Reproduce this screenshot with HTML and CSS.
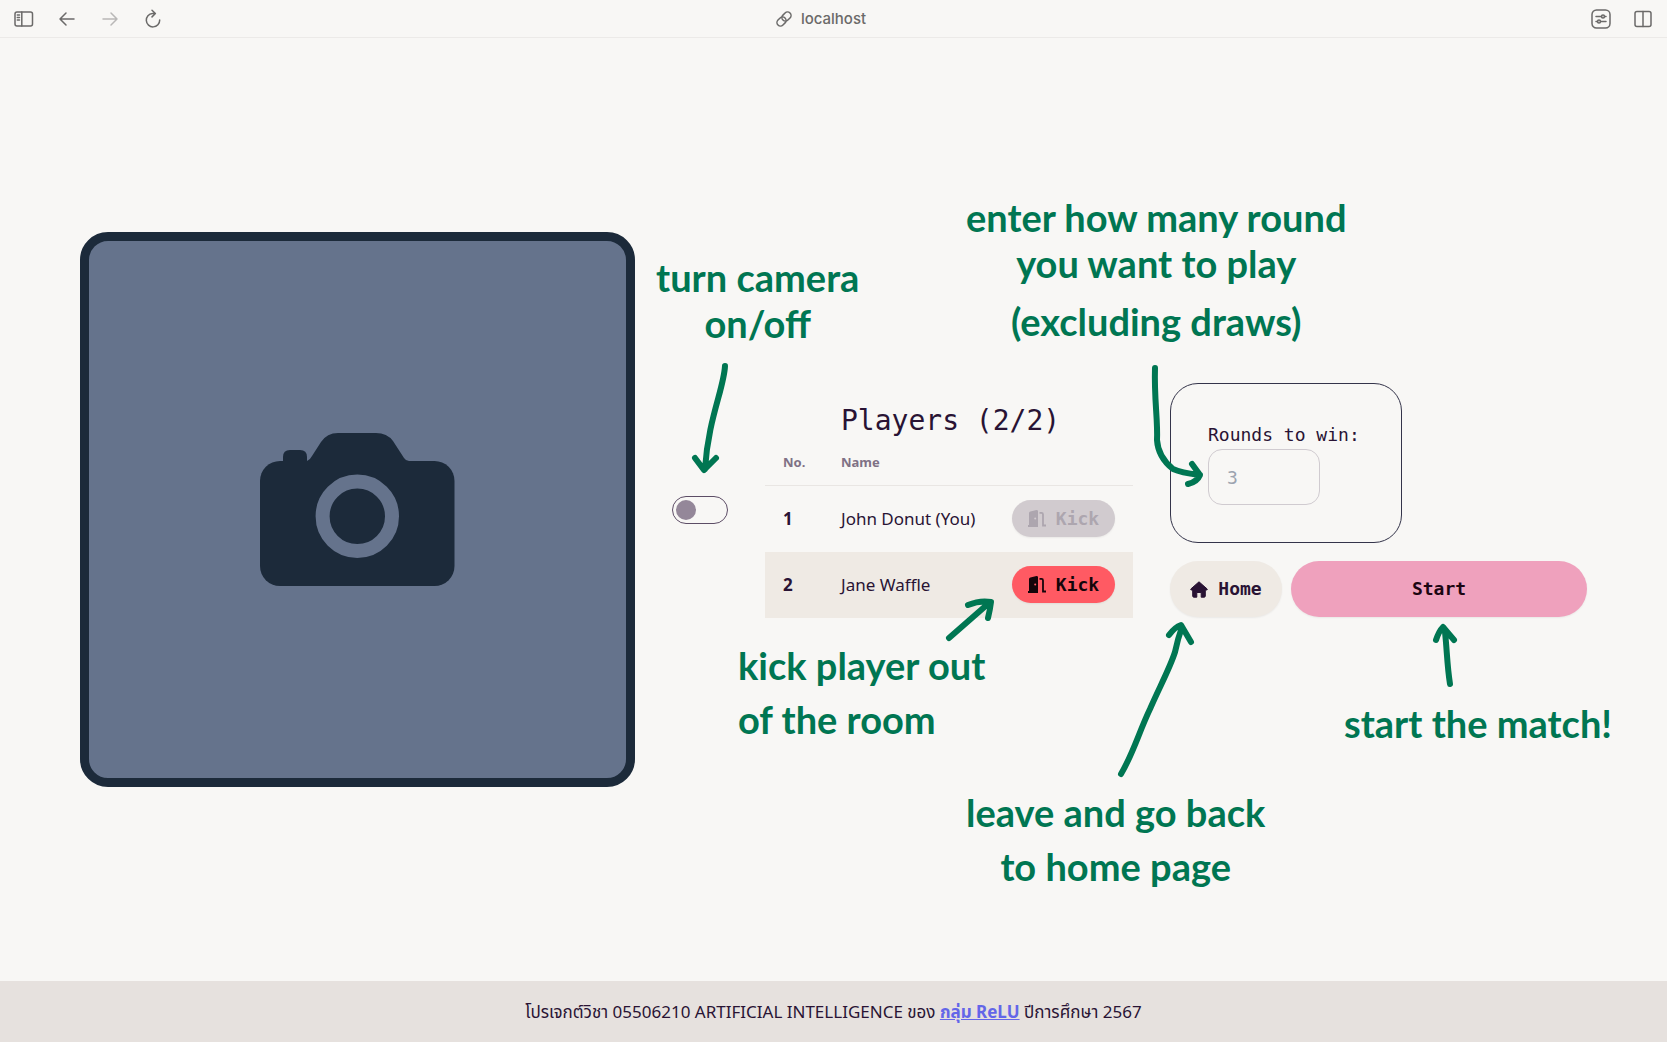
FILE: index.html
```html
<!DOCTYPE html>
<html lang="en">
<head>
<meta charset="utf-8">
<meta name="viewport" content="width=device-width, initial-scale=1">
<title>localhost</title>
<link rel="stylesheet" href="styles.css">
</head>
<body>
<svg class="defs" aria-hidden="true">
  <symbol id="door" viewBox="0 0 18 17">
    <path fill="currentColor" d="M0 15h1V3.200Q1 1.800 2.400 1.500L8.500 0Q10 0 10 1.300V17H0zM7.200 7.500a1 1 0 1 0 0 2a1 1 0 0 0 0-2z" fill-rule="evenodd"/>
    <path fill="none" stroke="currentColor" stroke-width="1.800" d="M11.500 2.900H13.500Q15 2.900 15 4.400V15.500H18"/>
  </symbol>
</svg>
<header class="toolbar">
  <div class="tools">
    <button class="tool" aria-label="Sidebar"><svg width="20" height="20" viewBox="0 0 20 20"><rect x="1" y="3" width="17.500" height="14" rx="2"/><path d="M7.800 3v14M3.300 6h2.200M3.300 8.500h2.200M3.300 11h2.200"/></svg></button>
    <button class="tool" aria-label="Back"><svg width="20" height="20" viewBox="0 0 20 20"><path d="M17 10H3M9 4l-6 6 6 6"/></svg></button>
    <button class="tool faded" aria-label="Forward" disabled><svg width="20" height="20" viewBox="0 0 20 20"><path d="M3 10h14M11 4l6 6-6 6"/></svg></button>
    <button class="tool" aria-label="Reload"><svg width="20" height="20" viewBox="0 0 20 20"><path d="M9.500 4.500A6.700 6.700 0 1 0 16.700 11M9.500 4.500h2.500M9 1.300l3.400 3.200-3.400 3.400"/></svg></button>
  </div>
  <div class="address">
    <svg width="18" height="18" viewBox="0 0 18 18"><g transform="rotate(-45 9 9)"><rect x="0.500" y="5.500" width="10" height="7" rx="3.500"/><rect x="7.500" y="5.500" width="10" height="7" rx="3.500"/></g></svg>
    <span>localhost</span>
  </div>
  <div class="tools right">
    <button class="tool" aria-label="Page settings"><svg width="20" height="20" viewBox="0 0 20 20"><rect x="1" y="1" width="18" height="18" rx="4.500"/><path d="M5 7.500h5.500M13.500 7.500H15M5 12.500h1.500M9.500 12.500H15"/><circle cx="12" cy="7.500" r="1.500"/><circle cx="8" cy="12.500" r="1.500"/></svg></button>
    <button class="tool" aria-label="Split view"><svg width="20" height="20" viewBox="0 0 20 20"><rect x="2" y="2.500" width="16" height="15" rx="2"/><path d="M10 2.500v15"/></svg></button>
  </div>
</header>

<main class="room">
  <div class="camera">
    <svg class="camera-icon" width="195" height="153" viewBox="0 0 195 153" role="img" aria-label="Camera is off">
      <rect y="28" width="194.500" height="125" rx="20"/>
      <path d="M23 34V24Q23 17 30 17H40Q47 17 47 24V28Q50 27 52 23L61 9Q67 0 78 0H116Q127 0 133 8L144 25Q146 28 149 28V40H23z"/>
      <circle class="lens" cx="97.300" cy="83.300" r="34.700"/>
    </svg>
  </div>
  <input class="toggle" type="checkbox" aria-label="Camera">
  <section class="players">
    <h1>Players (2/2)</h1>
    <table>
      <thead><tr><th class="no">No.</th><th>Name</th><th class="action"></th></tr></thead>
      <tbody>
        <tr><th class="no">1</th><td>John Donut (You)</td><td class="action"><button class="btn kick" disabled><svg width="18" height="17"><use href="#door"/></svg>Kick</button></td></tr>
        <tr class="alt"><th class="no">2</th><td>Jane Waffle</td><td class="action"><button class="btn kick"><svg width="18" height="17"><use href="#door"/></svg>Kick</button></td></tr>
      </tbody>
    </table>
  </section>
  <section class="controls">
    <div class="card">
      <label for="rounds">Rounds to win:</label>
      <input id="rounds" type="text" inputmode="numeric" placeholder="3">
    </div>
    <div class="actions">
      <button class="btn home"><svg width="18" height="17" viewBox="0 0 18 17"><path fill="currentColor" stroke="currentColor" stroke-linejoin="round" d="M9 .8L17.200 8Q17.500 9 16.500 9H15.300V15Q15.300 16.200 14 16.200H11.200V11.500H6.800V16.200H4Q2.700 16.200 2.700 15V9H1.500Q.5 9 .8 8z"/></svg>Home</button>
      <button class="btn start">Start</button>
    </div>
  </section>
</main>

<footer class="footer"><p>โปรเจกต์วิชา 05506210 ARTIFICIAL INTELLIGENCE ของ <a href="#">กลุ่ม ReLU</a> ปีการศึกษา 2567</p></footer>

<div class="notes">
  <svg class="arrows" width="1667" height="1042" viewBox="0 0 1667 1042" aria-hidden="true">
    <path d="M725 366C724 388 708 420 705 469M695 458L704 470L716 458"/>
    <path d="M1155 368C1154 400 1158 420 1157 440C1158 456 1168 465 1173 469C1182 473 1192 474 1200 475M1192 464L1200 475Q1197 482 1188 484"/>
    <path d="M949 638L989 603M968 605Q980 600 991 602Q990 610 988 618"/>
    <path d="M1121 774C1133 754 1139 732 1150 709C1159 688 1170 668 1175 652Q1178 638 1182 627M1169 635Q1175 627 1181 625L1191 642"/>
    <path d="M1450 684C1447 665 1447 650 1445 632M1436 640Q1439 631 1443 627L1454 640"/>
  </svg>
  <p class="note note-camera"><span>turn camera</span><span>on/off</span></p>
  <p class="note note-rounds"><span>enter how many round</span><span>you want to play</span><span class="aside">(excluding draws)</span></p>
  <p class="note loose note-kick"><span>kick player out</span><span>of the room</span></p>
  <p class="note loose note-home"><span>leave and go back</span><span>to home page</span></p>
  <p class="note loose note-start"><span>start the match!</span></p>
</div>
</body>
</html>
```
FILE: styles.css
```css
:root {
  --page: #f8f7f5;
  --ink: #291334;
  --sand: #efeae4;
  --mono: "DejaVu Sans Mono", "Liberation Mono", monospace;
  --sans: "Noto Sans", "Open Sans", "Noto Sans Thai", sans-serif;
}

* { box-sizing: border-box; }

body {
  position: relative;
  display: flex;
  flex-direction: column;
  min-height: 100vh;
  margin: 0;
  background: var(--page);
  color: var(--ink);
  font: 17px/24px var(--sans);
}

button, input { font: inherit; color: inherit; }
h1, p { margin: 0; }
.defs { position: absolute; width: 0; height: 0; }

/* Browser toolbar */
.toolbar {
  display: grid;
  grid-template-columns: 1fr auto 1fr;
  align-items: center;
  height: 38px;
  padding: 0 14px;
  border-bottom: 1px solid #eceae8;
  color: #6b6a69;
}
.toolbar svg {
  display: block;
  fill: none;
  stroke: currentColor;
  stroke-width: 1.5;
  stroke-linecap: round;
  stroke-linejoin: round;
}
.tools { display: flex; gap: 23px; }
.tools.right { justify-content: flex-end; gap: 22px; }
.tool { padding: 0; border: 0; background: none; }
.faded { color: #b9b8b7; }
.address {
  display: flex;
  align-items: center;
  gap: 8px;
  padding-right: 26px;
  font: 500 15px/20px Inter, sans-serif;
}

/* Room */
.room {
  flex: 1;
  display: grid;
  grid-template-columns: minmax(0, 555fr) 56px 368px minmax(0, 417fr);
  align-items: center;
  gap: 37px;
  padding: 0 80px;
}
.camera {
  display: flex;
  align-items: center;
  justify-content: center;
  aspect-ratio: 1;
  border: 9px solid #1c2a3a;
  border-radius: 28px;
  background: #65738c;
}
.camera-icon { fill: #1c2a3a; }
.lens { stroke: #65738c; stroke-width: 14; }

.toggle {
  appearance: none;
  width: 56px;
  height: 28px;
  margin: 0;
  padding: 3px;
  border: 1px solid #5d4d66;
  border-radius: 14px;
}
.toggle::before {
  content: "";
  display: block;
  width: 20px;
  height: 20px;
  border-radius: 50%;
  background: #948799;
}
.toggle:checked::before { margin-left: auto; }

.players h1 {
  padding-left: 76px;
  font: 400 28px/38px var(--mono);
  white-space: nowrap;
}
table { width: 100%; border-collapse: collapse; table-layout: fixed; }
th, td { padding: 0 18px; text-align: left; font-weight: 400; white-space: nowrap; }
td { padding-right: 0; }
thead th {
  height: 46px;
  border-bottom: 1px solid #e9e6e3;
  color: #7f7185;
  font-size: 13px;
  font-weight: 700;
}
tbody tr { height: 66px; }
tbody th { font-weight: 700; }
.alt { background: var(--sand); }
.no { width: 58px; }
.action { width: 121px; padding: 0 18px 0 0; }

.btn {
  display: flex;
  align-items: center;
  justify-content: center;
  gap: 10px;
  height: 56px;
  padding: 0;
  border: 0;
  border-radius: 28px;
  font: 700 18px/24px var(--mono);
  box-shadow: 0 1px 2px rgb(0 0 0 / 6%);
}
.kick { width: 103px; height: 37px; background: #ff5a63; color: #14050a; }
.kick:disabled { background: #d1cbcf; color: #ada6af; }

.controls {
  display: flex;
  flex-direction: column;
  gap: 18px;
  margin-bottom: 19px;
}
.card {
  display: flex;
  flex-direction: column;
  width: 232px;
  padding: 37px;
  border: 1px solid #34344a;
  border-radius: 28px;
}
.card label { font: 18px/28px var(--mono); white-space: nowrap; }
.card input {
  width: 112px;
  height: 56px;
  padding: 0 18px;
  border: 1px solid #d0cbd0;
  border-radius: 14px;
  background: transparent;
  font: 18px/28px var(--mono);
}
.card input::placeholder { color: #9ca3af; opacity: 1; }
.actions { display: flex; gap: 9px; }
.home { width: 112px; background: var(--sand); }
.start { flex: 1; background: #efa1bd; color: #1c0612; }

.footer {
  display: flex;
  align-items: center;
  justify-content: center;
  height: 61px;
  background: #e6e1de;
}
.footer a { color: #6366e8; font-weight: 700; }

/* Handwritten notes over the page */
.notes { position: absolute; inset: 0; overflow: hidden; pointer-events: none; color: #007652; }
.arrows {
  position: absolute;
  top: 0;
  left: 0;
  fill: none;
  stroke: currentColor;
  stroke-width: 6;
  stroke-linecap: round;
  stroke-linejoin: round;
}
.note {
  position: absolute;
  font: 700 38px/46px Lato, sans-serif;
  text-align: center;
  white-space: nowrap;
}
.note span { display: block; }
.loose { line-height: 54px; }
.aside { margin-top: 12px; }
.note-camera { left: 656px; top: 254px; }
.note-rounds { left: 966px; top: 194px; }
.note-kick { left: 738px; top: 638px; text-align: left; }
.note-home { left: 966px; top: 785px; }
.note-start { left: 1344px; top: 696px; }
```
